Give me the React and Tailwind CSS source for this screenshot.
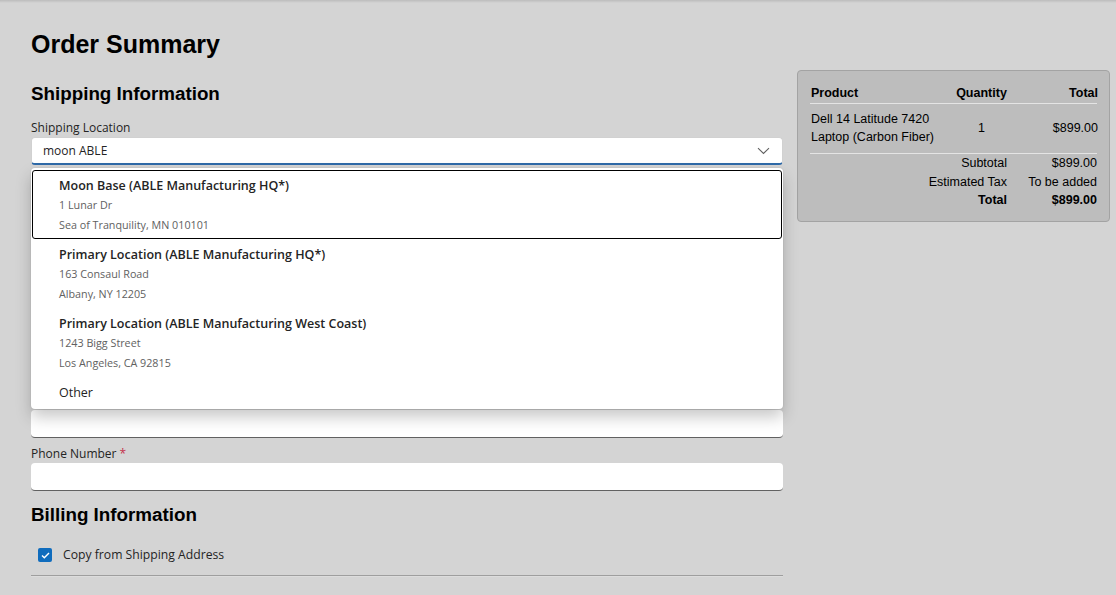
import React from "react";

const formFont = { fontFamily: '"Open Sans", "Noto Sans", sans-serif' };

function Field({ label, required }) {
  return (
    <div>
      <div className="text-[12px] leading-[16px] text-[#242424]">
        {label}
        {required && <span className="text-[#c4314b]"> *</span>}
      </div>
      <div className="mt-[1px] h-[28px] rounded-[4px] bg-white border-b border-[#616161]" />
    </div>
  );
}

const options = [
  {
    title: "Moon Base (ABLE Manufacturing HQ*)",
    l1: "1 Lunar Dr",
    l2: "Sea of Tranquility, MN 010101",
    active: true,
  },
  {
    title: "Primary Location (ABLE Manufacturing HQ*)",
    l1: "163 Consaul Road",
    l2: "Albany, NY 12205",
  },
  {
    title: "Primary Location (ABLE Manufacturing West Coast)",
    l1: "1243 Bigg Street",
    l2: "Los Angeles, CA 92815",
  },
];

export default function App() {
  return (
    <div className="relative min-h-[595px] w-full overflow-hidden bg-[#d4d4d4]">
      <div className="absolute left-0 right-0 top-0 h-[3px] bg-linear-to-b from-[#bcbcbc] to-[#d4d4d4]" />
      <div className="flex gap-[14px] pl-[31px]">
        {/* Left column */}
        <div className="w-[752px] shrink-0" style={formFont}>
          <h1
            className="mt-[29px] text-[25px] leading-[30px] font-bold text-black"
            style={{ fontFamily: '"Liberation Sans", Arial, sans-serif' }}
          >
            Order Summary
          </h1>
          <h2
            className="mt-[23px] text-[18.8px] leading-[23px] font-bold text-black"
            style={{ fontFamily: '"Liberation Sans", Arial, sans-serif' }}
          >
            Shipping Information
          </h2>

          <div className="mt-[15px] text-[12px] leading-[16px] text-[#242424]">
            Shipping Location
          </div>
          <div className="relative mt-[1px]">
            <div className="flex h-[28px] items-center justify-between rounded-[4px] border border-[#d1d1d1] border-b-[2px] border-b-[#2f6aa8] bg-white pl-[11px] pr-[12px]">
              <span className="text-[12px] text-[#242424]">moon ABLE</span>
              <svg width="13" height="8" viewBox="0 0 13 8" fill="none">
                <path d="M1 1.2 L6.5 6.5 L12 1.2" stroke="#616161" strokeWidth="1.1" />
              </svg>
            </div>

            {/* Dropdown listbox */}
            <div className="absolute left-0 right-0 top-[31px] z-10 h-[241px] rounded-[4px] bg-white px-[1px] pt-[2px] shadow-[0_8px_16px_rgba(0,0,0,0.22),0_0_2px_rgba(0,0,0,0.12)]">
              {options.map((o) => (
                <div
                  key={o.title}
                  className={
                    "rounded-[3px] border pl-[26px] pt-[6px] pb-[3px] " +
                    (o.active ? "border-black" : "border-transparent")
                  }
                >
                  <div className="text-[12.5px] leading-[18px] font-semibold text-[#242424]">
                    {o.title}
                  </div>
                  <div className="text-[10.75px] leading-[20px] text-[#616161]">{o.l1}</div>
                  <div className="text-[10.75px] leading-[20px] text-[#616161]">{o.l2}</div>
                </div>
              ))}
              <div className="border border-transparent pl-[26px] pt-[6px] text-[12.5px] leading-[18px] text-[#242424]">
                Other
              </div>
            </div>
          </div>

          {/* fields hidden beneath the open list */}
          <div className="h-[245px]" />
          <div className="h-[28px] rounded-[4px] bg-white border-b border-[#616161]" />
          <div className="mt-[8px]">
            <Field label="Phone Number" required />
          </div>

          <h2
            className="mt-[12px] text-[18.8px] leading-[23px] font-bold text-black"
            style={{ fontFamily: '"Liberation Sans", Arial, sans-serif' }}
          >
            Billing Information
          </h2>

          <div className="mt-[19px] flex h-[20px] items-center pl-[7px]">
            <div className="flex h-[14px] w-[14px] items-center justify-center rounded-[2px] bg-[#0f6cbd]">
              <svg width="9" height="7" viewBox="0 0 9 7" fill="none">
                <path d="M1 3.6 L3.3 5.8 L8 1" stroke="white" strokeWidth="1.4" />
              </svg>
            </div>
            <span className="ml-[11px] text-[12.2px] text-[#242424]">Copy from Shipping Address</span>
          </div>

          <div className="mt-[10px] border-t border-[#9e9e9e]" />
          <div className="border-t border-[#dcdcdc]" />
        </div>

        {/* Right summary card */}
        <div
          className="mt-[70px] h-[152px] w-[313px] shrink-0 self-start rounded-[4px] border border-[#a3a3a3] bg-[#bdbdbd] px-[12px] pt-[13px] text-[12.5px] text-black"
          style={{ fontFamily: '"Liberation Sans", Arial, sans-serif' }}
        >
          <div className="grid grid-cols-[142px_57px_88px] border-b border-[#e4e4e4] pb-[1px] pl-[1px] leading-[18px] font-bold">
            <div>Product</div>
            <div className="text-center">Quantity</div>
            <div className="text-right">Total</div>
          </div>
          <div className="grid grid-cols-[142px_57px_88px] items-center border-b border-[#e4e4e4] pt-[6px] pb-[7px] pl-[1px] leading-[18px]">
            <div>
              Dell 14 Latitude 7420
              <br />
              Laptop (Carbon Fiber)
            </div>
            <div className="text-center">1</div>
            <div className="text-right">$899.00</div>
          </div>
          <div className="grid grid-cols-[197px_90px] leading-[18.5px]">
            <div className="text-right">Subtotal</div>
            <div className="text-right">$899.00</div>
            <div className="text-right">Estimated Tax</div>
            <div className="text-right">To be added</div>
            <div className="text-right font-bold">Total</div>
            <div className="text-right font-bold">$899.00</div>
          </div>
        </div>
      </div>
    </div>
  );
}
